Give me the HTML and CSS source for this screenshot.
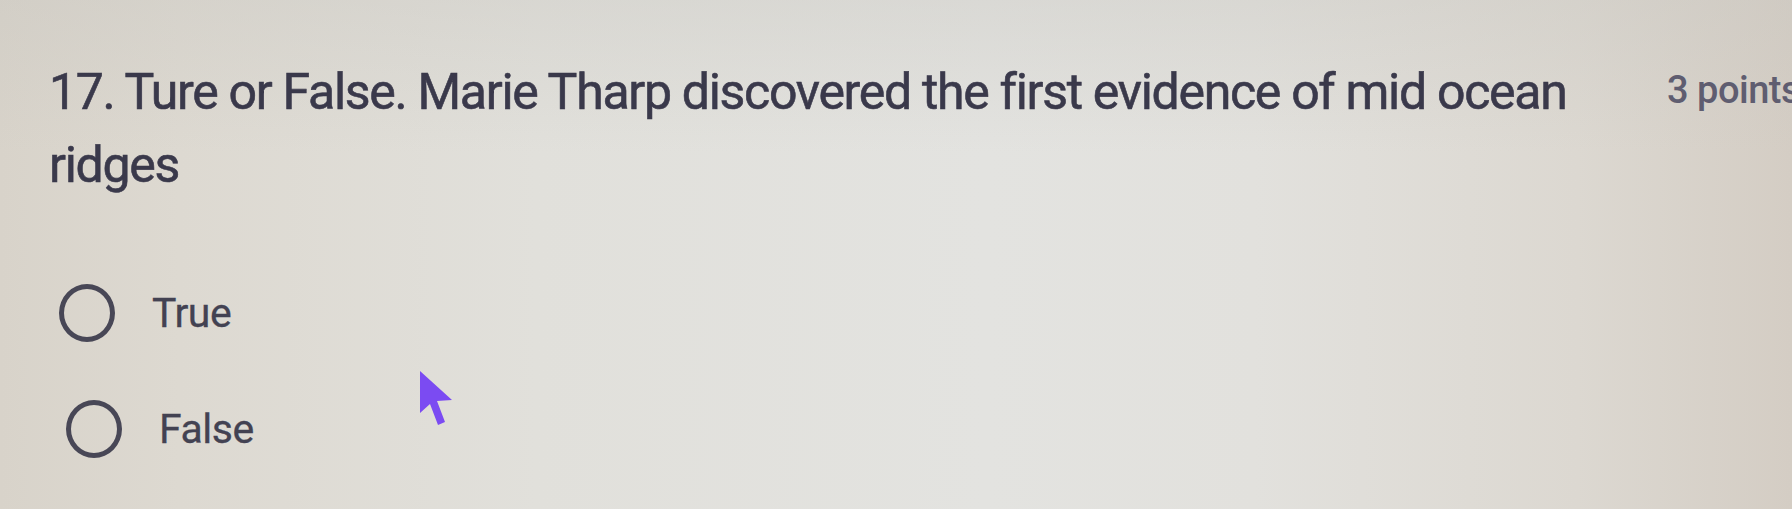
FILE: index.html
```html
<!DOCTYPE html>
<html lang="en">
<head>
<meta charset="utf-8">
<title>Question 17</title>
<link rel="stylesheet" href="styles.css">
</head>
<body>
<div class="page">
  <div class="question">
    <div class="question-head">
      <div class="title">17. Ture or False. Marie Tharp discovered the first evidence of mid ocean ridges</div>
      <div class="points">3 points</div>
    </div>
    <div class="options">
      <label class="option">
        <span class="radio"></span>
        <span class="option-label">True</span>
      </label>
      <label class="option option-shift">
        <span class="radio"></span>
        <span class="option-label">False</span>
      </label>
    </div>
  </div>
  <svg class="cursor" width="40" height="60" viewBox="0 0 40 60" aria-hidden="true">
    <path d="M2 2 L2 44 L12 35 L20 56 L27 53 L19 32 L34 31 Z" fill="#7b4bf2"/>
  </svg>
</div>
</body>
</html>
```
FILE: styles.css
```css
html, body {
  margin: 0;
  padding: 0;
}

body {
  width: 1792px;
  height: 509px;
  overflow: hidden;
  font-family: Roboto, "Liberation Sans", Arial, sans-serif;
  color: #3c3b4b;
  background:
    linear-gradient(180deg, rgba(200,198,192,0.35) 0%, rgba(255,255,255,0) 30%, rgba(255,255,255,0) 100%),
    linear-gradient(90deg, #d8d3ca 0%, #ddd9d1 10%, #e1e0db 30%, #e3e3e0 55%, #e2e1dd 70%, #dcd8d1 88%, #d4cdc4 100%);
}

.page {
  position: relative;
  width: 1792px;
  height: 509px;
  box-sizing: border-box;
  padding: 56px 0 0 49px;
}

.question {
  display: flex;
  flex-direction: column;
}

.question-head {
  display: flex;
  align-items: flex-start;
}

.title {
  width: 1579px;
  flex: none;
  font-size: 50px;
  line-height: 73px;
  font-weight: 400;
  letter-spacing: -1.3px;
  color: #3a394b;
  -webkit-text-stroke: 0.6px #3a394b;
}

.points {
  margin-left: 39px;
  padding-top: 12px;
  font-size: 38px;
  line-height: 44px;
  font-weight: 500;
  letter-spacing: -0.5px;
  color: #5f5d70;
  white-space: nowrap;
}

.options {
  display: flex;
  flex-direction: column;
  gap: 58px;
  margin-top: 82px;
  padding-left: 10px;
}

.option {
  display: flex;
  align-items: center;
  gap: 37px;
  height: 58px;
}

.option-shift {
  padding-left: 7px;
}

.radio {
  width: 46px;
  height: 48px;
  border: 5px solid #484756;
  border-radius: 50%;
  flex: none;
}

.option-label {
  font-size: 41px;
  line-height: 48px;
  letter-spacing: -0.5px;
  color: #434252;
  -webkit-text-stroke: 0.3px #434252;
}

.cursor {
  position: absolute;
  left: 418px;
  top: 369px;
}
```
